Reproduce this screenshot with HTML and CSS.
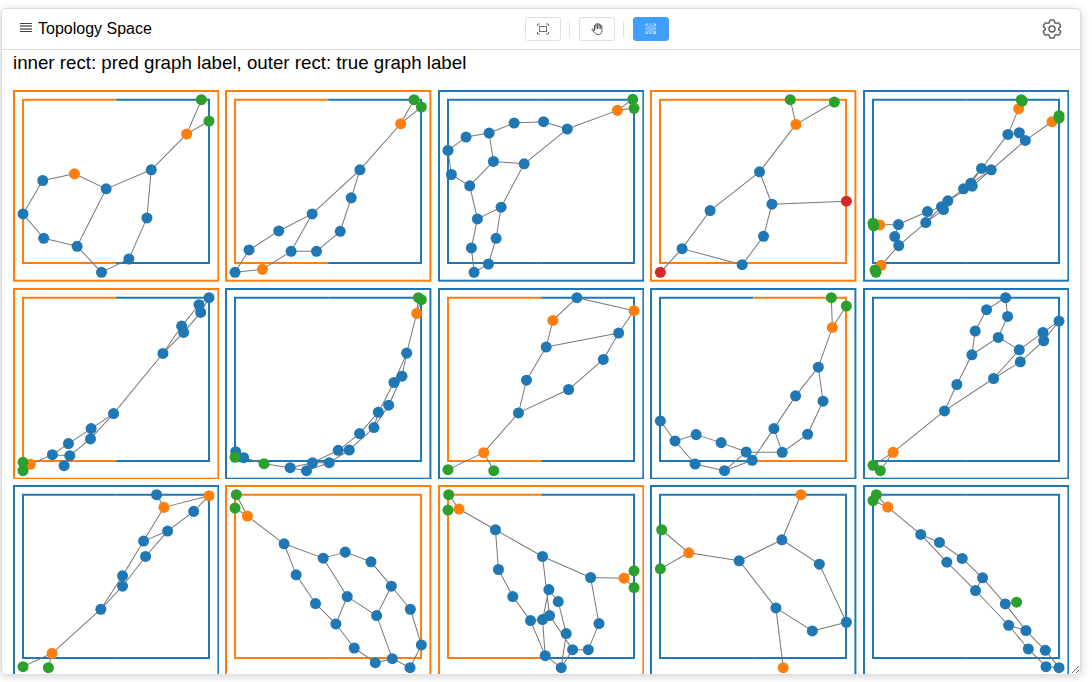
FILE: index.html
```html
<!DOCTYPE html>
<html lang="en">
<head>
<meta charset="utf-8">
<meta name="viewport" content="width=device-width, initial-scale=1">
<title>Topology Space</title>
<link rel="stylesheet" href="styles.css">
</head>
<body>
<main class="panel">
  <header class="panel-header">
    <h1 class="title">
      <svg class="title-icon" viewBox="0 0 12 9" aria-hidden="true">
        <path d="M0 .5h12M0 8.5h12" stroke="#444"/>
        <path d="M0 3h12M0 6h12" stroke="#888" stroke-width="2"/>
      </svg>
      Topology Space
    </h1>
    <div class="tools">
      <button class="tool" type="button" aria-label="Fit view">
        <svg viewBox="0 0 12 12" fill="none" stroke="#707276">
          <rect x="2.5" y="3.5" width="7" height="5"/>
          <path d="M.5 3V1H3M9 1h2.5v2M.5 9v2H3M9 11h2.5V9"/>
        </svg>
      </button>
      <span class="divider"></span>
      <button class="tool" type="button" aria-label="Pan">
        <svg viewBox="0 0 12 12" fill="#c4c5c7" stroke="#55575b" stroke-linejoin="round" stroke-linecap="round">
          <path d="M3.5 7.5V2.6c0-1 1.4-1 1.4 0V1.5c0-1.1 1.6-1.1 1.6 0v-.2c0-1.1 1.6-1.1 1.6 0v1c0-1 1.5-1 1.5 0V3c0-.9 1.3-.9 1.3 0v4.8c0 2.3-1.3 3.7-3.6 3.7-2.1 0-3-.9-3.8-2.2L.9 6.9c-.5-.9.7-1.5 1.3-.8z" fill="#fff"/>
          <path d="M4.9 2v3.5M6.5 1.2v4.3M8.1 1.5v4M9.6 2.5v3"/>
        </svg>
      </button>
      <span class="divider"></span>
      <button class="tool tool-active" type="button" aria-label="Box select" aria-pressed="true">
        <svg viewBox="0 0 12 12" fill="none" stroke="#c6e2ff">
          <path d="M2 2h8v8H2z" fill="#79bbff" stroke="none"/>
          <path d="M1 3V1h2M4.5 1h2M8 1h2.5v2M10.5 4.5v2M1 4.5v2M1 8v2.5h2M4.5 10.5h2M8 10.5h3M10.5 8v3"/>
        </svg>
      </button>
    </div>
    <button class="settings" type="button" aria-label="Settings">
      <svg viewBox="2 2 20 20" fill="none" stroke="#606266" stroke-width="1.5" stroke-linejoin="round">
        <path d="M9.594 3.94c.09-.542.56-.94 1.11-.94h2.593c.55 0 1.02.398 1.11.94l.213 1.281c.063.374.313.686.645.87.074.04.147.083.22.127.325.196.72.257 1.075.124l1.217-.456a1.125 1.125 0 0 1 1.37.49l1.296 2.247a1.125 1.125 0 0 1-.26 1.431l-1.003.827c-.293.241-.438.613-.43.992a7.723 7.723 0 0 1 0 .255c-.008.378.137.75.43.991l1.004.827c.424.35.534.955.26 1.43l-1.298 2.247a1.125 1.125 0 0 1-1.369.491l-1.217-.456c-.355-.133-.75-.072-1.076.124a6.47 6.47 0 0 1-.22.128c-.331.183-.581.495-.644.869l-.213 1.281c-.09.543-.56.94-1.11.94h-2.594c-.55 0-1.019-.398-1.11-.94l-.213-1.281c-.062-.374-.312-.686-.644-.87a6.52 6.52 0 0 1-.22-.127c-.325-.196-.72-.257-1.076-.124l-1.217.456a1.125 1.125 0 0 1-1.369-.49l-1.297-2.247a1.125 1.125 0 0 1 .26-1.431l1.004-.827c.292-.24.437-.613.43-.991a6.932 6.932 0 0 1 0-.255c.007-.38-.138-.751-.43-.992l-1.004-.827a1.125 1.125 0 0 1-.26-1.43l1.297-2.247a1.125 1.125 0 0 1 1.37-.491l1.216.456c.356.133.751.072 1.076-.124.072-.044.146-.086.22-.128.332-.183.582-.495.644-.869l.214-1.28Z"/>
        <circle cx="12" cy="12" r="3"/>
      </svg>
    </button>
  </header>
  <section class="panel-body">
    <h3 class="legend">inner rect: pred graph label, outer rect: true graph label</h3>
    <div class="grid" id="graphs"></div>
  </section>
</main>
<script src="graphs.js"></script>
</body>
</html>
```

FILE: styles.css
```css
* {
  box-sizing: border-box;
}

body {
  margin: 0;
  padding: 8px 11px 8px 1px;
  height: 100vh;
  overflow: hidden;
  background: #fff;
  color: #000;
  font-family: "Liberation Sans", Arial, sans-serif;
}

.panel {
  display: flex;
  flex-direction: column;
  height: 100%;
  overflow: hidden;
  resize: both;
  background: #fff;
  border: 1px solid #dcdcdc;
  border-bottom: 0;
  border-radius: 5px;
  box-shadow: 0 2px 10px rgba(0, 0, 0, 0.2);
}

.panel-header {
  display: flex;
  flex: none;
  align-items: center;
  justify-content: space-between;
  height: 41px;
  padding: 0 18px;
  border-bottom: 1px solid #dcdcdc;
}

.title {
  display: flex;
  align-items: center;
  gap: 6px;
  margin: 0;
  font-size: 16px;
  font-weight: 400;
  line-height: 20px;
}

.title-icon {
  width: 12px;
  height: 9px;
  margin-bottom: 4px;
}

.tools {
  display: flex;
  align-items: center;
  gap: 8px;
}

.tool {
  display: flex;
  align-items: center;
  justify-content: center;
  width: 36px;
  height: 24px;
  padding: 0;
  background: #fff;
  border: 1px solid #dcdfe6;
  border-radius: 3px;
}

.tool svg {
  width: 12px;
  height: 12px;
}

.tool-active {
  background: #409eff;
  border-color: #409eff;
}

.divider {
  width: 2px;
  height: 16px;
  border-left: 1px solid #dcdfe6;
}

.settings {
  width: 20px;
  height: 20px;
  padding: 0;
  background: none;
  border: 0;
}

.settings svg {
  display: block;
  width: 100%;
  height: 100%;
  overflow: visible;
}

.panel-body {
  flex: 1;
  min-height: 0;
  padding: 0 11px;
  overflow: hidden;
}

.legend {
  margin: 0 0 14px;
  font-weight: 400;
  line-height: 26px;
}

.grid {
  display: grid;
  grid-template-columns: repeat(5, 1fr);
  gap: 6px;
}

.graph {
  display: block;
  width: 100%;
}

.frame {
  fill: none;
  stroke-width: 6;
}

.edge {
  fill: none;
  stroke: #777;
  stroke-width: 3;
}
```

FILE: graphs.js
```js
const COLORS = { b: "#1f77b4", o: "#ff7f0e", g: "#2ca02c", r: "#d62728" };
const WIDTH = 618;
const HEIGHT = 574;

// origin: top left of the tile; labels: outer, inner left, inner right
const graphs = [
  { origin: [39, 29], labels: "oob",
    nodes: "g603,58 g626,122 o559,161 b453,268 b318,325 o223,280 b128,300 b69,400 b131,473 b231,497 b304,575 b386,535 b440,412",
    edges: "0-2 1-2 2-3 3-4 4-5 5-6 6-7 7-8 8-9 9-4 9-10 10-11 11-12 12-3" },
  { origin: [676, 29], labels: "oob",
    nodes: "g1242,58 g1264,80 o1202,130 b1080,268 b1054,352 b1021,452 b950,512 b874,512 b937,400 b837,451 b748,508 b706,575 o788,566",
    edges: "0-2 1-2 2-3 3-4 4-5 5-6 6-7 7-8 8-3 8-9 9-10 10-11 11-12 12-7" },
  { origin: [24, 29], labels: "bbb",
    nodes: "g607,57 g611,84 o561,90 b411,146 b340,124 b252,128 b177,158 b108,170 b54,210 b64,282 b119,316 b190,243 b282,250 b213,380 b142,415 b124,502 b132,575 b175,550 b198,473",
    edges: "0-2 1-2 2-3 3-4 4-5 5-6 6-7 7-8 8-9 9-10 10-11 11-6 11-12 12-3 12-13 13-14 14-10 14-15 15-16 16-17 17-18 18-13" },
  { origin: [661, 29], labels: "ooo",
    nodes: "g1081,58 g1213,65 o1098,132 b989,274 b841,390 b757,504 r692,575 b937,552 b1001,467 b1026,371 r1249,362",
    edges: "0-2 1-2 2-3 3-4 4-5 5-6 5-7 7-8 8-9 9-3 9-10" },
  { origin: [669, 29], labels: "bbb",
    nodes: "o1135,85 g1143,58 g1146,62 o1235,124 g1256,106 g1256,113 b1103,162 b1137,157 b1155,180 b1024,264 b1053,268 b992,308 b996,317 b970,325 b923,361 b904,379 b910,387 b862,393 b857,426 b775,432 b764,468 b776,495 o719,433 g699,428 g701,436 o723,554 g705,568 g708,575",
    edges: "0-1 0-2 0-6 3-4 3-5 3-8 6-7 7-8 6-9 8-10 9-11 9-13 10-11 10-12 11-13 12-13 13-14 12-14 14-15 14-16 15-17 15-18 16-18 17-19 18-21 19-20 20-21 19-22 22-23 22-24 21-25 25-26 25-27" },
  { origin: [39, 22], labels: "oob",
    nodes: "b626,51 b596,72 b601,95 b544,136 b550,155 b488,218 b340,398 b273,443 b271,474 b205,488 b209,524 b157,521 b192,554 o91,550 g69,544 g69,569",
    edges: "0-1 0-2 1-3 2-4 3-5 4-5 5-6 6-7 6-8 7-9 8-10 9-11 10-11 10-12 11-13 13-14 13-15" },
  { origin: [676, 22], labels: "bbb",
    nodes: "g1255,51 g1264,57 o1250,98 b1220,217 b1206,286 b1182,305 b1166,373 b1135,394 b1122,440 b1079,458 b1048,507 b1015,508 b988,545 b938,545 b920,569 b871,560 g793,548 b732,530 b708,512 g706,529",
    edges: "0-2 1-2 2-3 3-4 3-5 4-6 5-7 6-8 7-8 7-9 8-10 9-11 10-11 10-12 11-13 12-13 12-14 13-15 14-15 15-16 16-17 17-18 17-19" },
  { origin: [24, 22], labels: "bob",
    nodes: "b440,51 o611,90 o368,119 b348,199 b565,157 b519,236 b415,326 b289,298 b265,396 o161,515 g54,566 g191,569",
    edges: "0-1 0-2 2-3 3-4 4-1 4-5 5-6 6-8 3-7 7-8 8-9 9-10 9-11" },
  { origin: [661, 22], labels: "bbo",
    nodes: "g1204,51 g1249,76 o1207,140 b1165,259 b1097,345 b1179,361 b1133,460 b1057,514 b1032,443 b949,513 b967,538 b884,569 b796,549 b736,480 b799,461 b874,485 b692,420",
    edges: "0-2 1-2 2-3 3-4 3-5 5-6 6-7 7-8 4-8 8-10 9-7 9-11 10-11 11-12 12-13 13-14 14-15 15-9 13-16" },
  { origin: [39, 22], labels: "bbb",
    nodes: "b466,51 b409,87 b472,107 b375,151 b444,170 b365,222 b507,207 b578,155 b580,180 b626,121 b510,243 b430,293 b320,311 b283,390 o129,514 g69,553 g91,569",
    edges: "0-1 0-2 1-3 2-4 3-5 4-5 4-6 6-7 7-9 8-9 8-10 10-11 6-11 5-12 12-13 11-13 13-14 14-15 14-16" },
  { origin: [39, 15], labels: "bbb",
    nodes: "b469,44 o491,82 o626,47 b580,94 b502,153 b430,183 b436,229 b367,287 b367,318 b302,387 o156,519 g69,559 g145,562",
    edges: "0-1 1-2 2-3 3-4 4-5 1-5 4-6 5-7 6-8 7-9 8-9 9-10 10-11 10-12" },
  { origin: [676, 15], labels: "ooo",
    nodes: "g710,44 g706,84 o743,108 b853,191 b970,234 b1036,216 b1113,245 b1174,318 b1231,387 b1264,494 b1230,562 b1177,535 b1126,547 b1063,503 b1008,431 b947,370 b889,284 b1042,349 b1130,406",
    edges: "0-2 1-2 2-3 3-4 4-5 5-6 6-7 7-8 8-9 9-10 10-11 11-12 12-13 13-14 14-15 15-16 16-3 4-17 17-14 17-18 18-7 18-11" },
  { origin: [24, 15], labels: "oob",
    nodes: "g56,44 g54,90 o87,87 b196,149 b337,229 b481,292 o581,294 g611,272 g611,322 b205,268 b248,349 b301,421 b337,418 b358,406 b356,328 b384,364 b408,460 b427,508 b474,508 b506,430 b345,526 b393,562",
    edges: "0-2 1-2 2-3 3-4 4-5 5-6 6-7 6-8 3-9 9-10 10-11 11-12 11-20 12-20 12-13 12-14 4-13 14-15 15-16 16-21 13-17 17-18 18-19 19-5 20-21 17-21" },
  { origin: [661, 15], labels: "bbb",
    nodes: "o1113,44 b1056,179 b928,242 b1168,252 b1249,426 b1147,452 b1038,383 o1060,562 o777,218 g696,149 g692,266",
    edges: "0-1 1-2 1-3 3-4 4-5 5-6 6-2 6-7 2-8 8-9 8-10" },
  { origin: [39, 15], labels: "bbb",
    nodes: "g79,44 g69,62 o113,81 b212,163 b268,187 b336,235 b397,293 b290,246 b376,331 b465,371 g499,366 b475,435 b527,451 b534,506 b585,510 b587,559 b626,562",
    edges: "0-2 1-2 2-3 3-4 4-5 5-6 3-7 7-8 6-8 6-9 9-10 9-12 8-11 11-12 11-13 12-14 13-15 14-16 15-16" },
];

function drawGraph({ origin: [x, y], labels, nodes, edges }) {
  const [outer, left, right] = [...labels].map((key) => COLORS[key]);
  const points = nodes.split(" ").map((node) => {
    const [cx, cy] = node.slice(1).split(",").map(Number);
    return { cx, cy, fill: COLORS[node[0]] };
  });
  const lines = edges.split(" ").map((edge) => {
    const [a, b] = edge.split("-").map((i) => points[i]);
    return `M${a.cx} ${a.cy}L${b.cx} ${b.cy}`;
  });
  const circles = points.map((p) => `<circle cx="${p.cx}" cy="${p.cy}" r="16.5" fill="${p.fill}"/>`);
  const middle = x + WIDTH / 2;
  return `<svg class="graph" viewBox="${x} ${y} ${WIDTH} ${HEIGHT}">
    <rect class="frame" x="${x + 3}" y="${y + 3}" width="${WIDTH - 6}" height="${HEIGHT - 6}" stroke="${outer}"/>
    <path class="frame" stroke="${left}" d="M${middle} ${y + 29}H${x + 30}V${y + 518}H${middle}"/>
    <path class="frame" stroke="${right}" d="M${middle} ${y + 29}H${x + 587}V${y + 518}H${middle}"/>
    <path class="edge" d="${lines.join("")}"/>
    ${circles.join("")}
  </svg>`;
}

document.getElementById("graphs").innerHTML = graphs.map(drawGraph).join("");
```
